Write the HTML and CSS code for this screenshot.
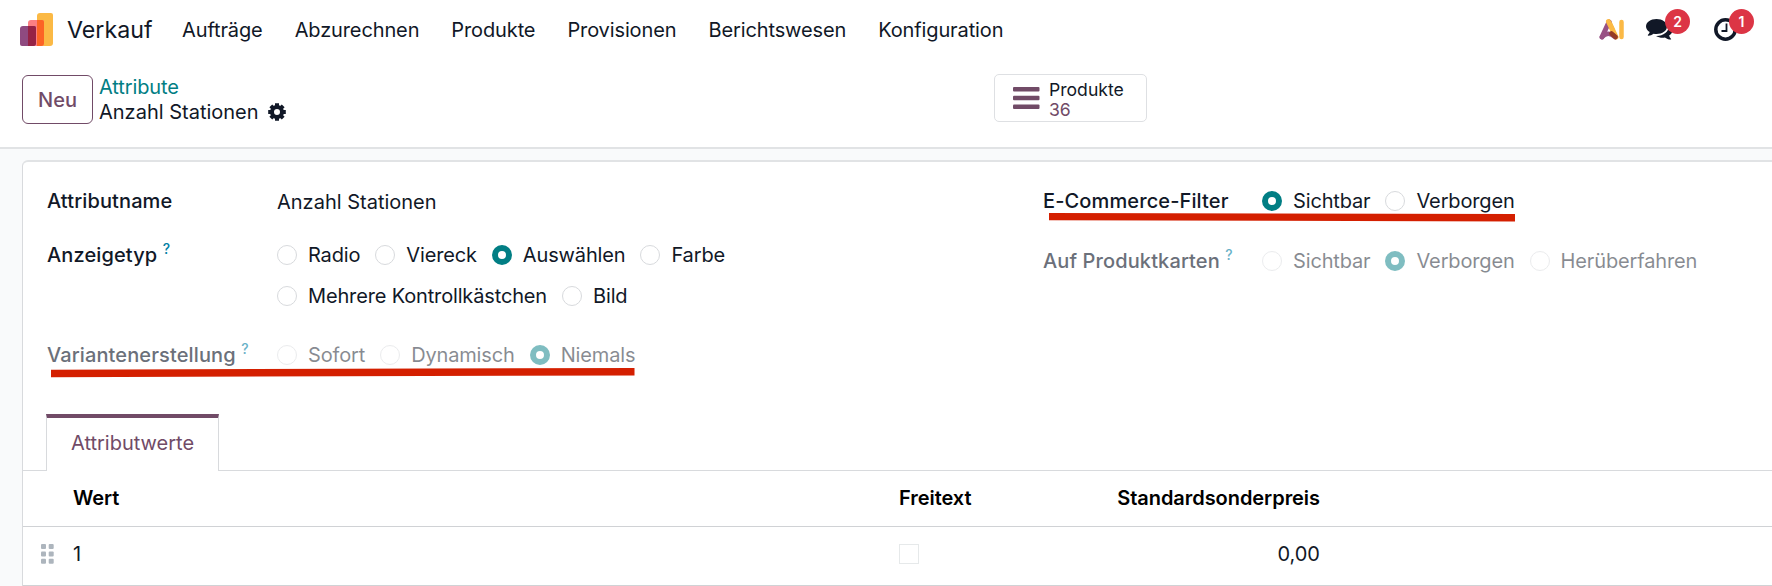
FILE: index.html
```html
<!DOCTYPE html>
<html lang="de">
<head>
    <meta charset="UTF-8">
    <meta name="viewport" content="width=device-width, initial-scale=1.0">
    <title>Verkauf - Anzahl Stationen</title>
    <link rel="stylesheet" href="styles.css">
</head>
<body>
    <nav class="navbar">
        <svg class="logo" width="33" height="33" viewBox="0 0 33 33">
            <path d="M17 3a3 3 0 0 1 3-3h11a2 2 0 0 1 2 2v28a3 3 0 0 1-3 3H17z" fill="#fbb945"/>
            <path d="M8 10a3 3 0 0 1 3-3h11a2 2 0 0 1 2 2v21a3 3 0 0 1-3 3H8z" fill="#fb7f83"/>
            <path d="M17 7h5a2 2 0 0 1 2 2v21a3 3 0 0 1-3 3h-4z" fill="#fc6425"/>
            <path d="M0 16a3 3 0 0 1 3-3h11a2 2 0 0 1 2 2v15a3 3 0 0 1-3 3H2a2 2 0 0 1-2-2z" fill="#8f4a80"/>
            <path d="M8 13h6a2 2 0 0 1 2 2v15a3 3 0 0 1-3 3H8z" fill="#962345"/>
        </svg>
        <a href="#" class="brand">Verkauf</a>
        <ul class="menu">
            <li><a href="#">Aufträge</a></li>
            <li><a href="#">Abzurechnen</a></li>
            <li><a href="#">Produkte</a></li>
            <li><a href="#">Provisionen</a></li>
            <li><a href="#">Berichtswesen</a></li>
            <li><a href="#">Konfiguration</a></li>
        </ul>
        <div class="systray">
            <svg class="ai-icon" width="25" height="21" viewBox="0 0 25 21">
                <path d="M10 3L17 18" stroke="#fbb945" stroke-width="5" stroke-linecap="round"/>
                <path d="M10 3L3 18" stroke="#985184" stroke-width="5" stroke-linecap="round"/>
                <path d="M9.5 2.6L13.5 11" stroke="#fbb945" stroke-width="5" stroke-linecap="round"/>
                <path d="M3 18Q9 11.500 16 18" fill="none" stroke="#985184" stroke-width="4.500" stroke-linecap="round"/>
                <path d="M12.500 14.500L16.500 18" stroke="#953b24" stroke-width="4.500" stroke-linecap="round"/>
                <path d="M22.500 3V18" stroke="#fbb945" stroke-width="4.500" stroke-linecap="round"/>
            </svg>
            <div class="tray-item">
                <svg width="27" height="23" viewBox="0 0 27 23" fill="#111827">
                    <path d="M10.500 0C16.500 0 21 3.200 21 7.500S16.500 15 10.500 15c-1 0-2-.1-2.900-.3-1.600 1.200-3.400 1.900-5.200 2-.6 0-.8-.5-.4-.9.900-.8 1.400-1.700 1.700-2.700C1.400 11.700 0 9.700 0 7.500 0 3.200 4.500 0 10.500 0z"/>
                    <path d="M23 6c2.200 1.300 3.500 3 3.500 5.200 0 2.100-1.300 4-3.400 5.300.3 1.200.9 2.200 1.800 3.200.4.500.2.900-.4.900-2 0-4-.800-5.600-2.100-3.300.5-6.400-.1-8.900-1.600C16.500 17.200 23.500 13 23 6z"/>
                </svg>
                <span class="badge">2</span>
            </div>
            <div class="tray-item clock">
                <svg width="23" height="23" viewBox="0 0 23 23" fill="none" stroke="#111827">
                    <circle cx="11.500" cy="11.500" r="9.700" stroke-width="3.500"/>
                    <path d="M12.500 5.500v7.500h-5" stroke-width="1.800"/>
                </svg>
                <span class="badge">1</span>
            </div>
        </div>
    </nav>

    <header class="control-panel">
        <button class="btn-new">Neu</button>
        <div class="breadcrumb">
            <a href="#">Attribute</a>
            <div class="current">
                <span>Anzahl Stationen</span>
                <svg width="18" height="18" viewBox="-9 -9 18 18">
                    <circle r="5" fill="none" stroke="#111827" stroke-width="4"/>
                    <path d="M0-8.800V-5M0 8.800V5M-8.800 0H-5M8.800 0H5M-6.200-6.200L-4-4M6.200 6.200L4 4M-6.200 6.200L-4 4M6.200-6.200L4-4" stroke="#111827" stroke-width="4"/>
                </svg>
            </div>
        </div>
        <button class="stat-button">
            <svg width="27" height="22" viewBox="0 0 27 22" fill="#714b67">
                <rect y="0" width="26.500" height="4.500" rx="1"/>
                <rect y="8.700" width="26.500" height="4.500" rx="1"/>
                <rect y="17.400" width="26.500" height="4.500" rx="1"/>
            </svg>
            <span class="stat-info">
                <span>Produkte</span>
                <span class="stat-value">36</span>
            </span>
        </button>
    </header>

    <main class="content">
        <div class="sheet">
            <div class="groups">
                <div class="group">
                    <div class="field name">
                        <label>Attributname</label>
                        <span class="value">Anzahl Stationen</span>
                    </div>
                    <div class="field type">
                        <label>Anzeigetyp <sup>?</sup></label>
                        <div class="choices">
                            <span class="choice"><i class="radio"></i>Radio</span>
                            <span class="choice"><i class="radio"></i>Viereck</span>
                            <span class="choice"><i class="radio checked"></i>Auswählen</span>
                            <span class="choice"><i class="radio"></i>Farbe</span>
                            <span class="choice"><i class="radio"></i>Mehrere Kontrollkästchen</span>
                            <span class="choice"><i class="radio"></i>Bild</span>
                        </div>
                    </div>
                    <div class="field variant disabled">
                        <label>Variantenerstellung <sup>?</sup></label>
                        <div class="choices">
                            <span class="choice"><i class="radio"></i>Sofort</span>
                            <span class="choice"><i class="radio"></i>Dynamisch</span>
                            <span class="choice"><i class="radio checked"></i>Niemals</span>
                        </div>
                        <svg class="marker" width="584" height="10" viewBox="0 0 584 10">
                            <path d="M0 1.700L583.500 0V7.500L0 9.200z" fill="#d41f00"/>
                        </svg>
                    </div>
                </div>
                <div class="group">
                    <div class="field filter">
                        <label>E-Commerce-Filter</label>
                        <div class="choices">
                            <span class="choice"><i class="radio checked"></i>Sichtbar</span>
                            <span class="choice"><i class="radio"></i>Verborgen</span>
                        </div>
                        <svg class="marker" width="466" height="9" viewBox="0 0 466 9">
                            <path d="M0 0L466 1V8.500L0 7.300z" fill="#d41f00"/>
                        </svg>
                    </div>
                    <div class="field cards disabled">
                        <label>Auf Produktkarten <sup>?</sup></label>
                        <div class="choices">
                            <span class="choice"><i class="radio"></i>Sichtbar</span>
                            <span class="choice"><i class="radio checked"></i>Verborgen</span>
                            <span class="choice"><i class="radio"></i>Herüberfahren</span>
                        </div>
                    </div>
                </div>
            </div>

            <div class="tabs">
                <a href="#" class="tab">Attributwerte</a>
            </div>

            <table class="list">
                <colgroup>
                    <col class="col-handle">
                    <col class="col-value">
                    <col class="col-free">
                    <col class="col-price">
                    <col>
                </colgroup>
                <thead>
                    <tr>
                        <th></th>
                        <th>Wert</th>
                        <th>Freitext</th>
                        <th class="number">Standardsonderpreis</th>
                        <th></th>
                    </tr>
                </thead>
                <tbody>
                    <tr>
                        <td class="handle">
                            <svg width="13" height="20" viewBox="0 0 13 20" fill="#adb5bd">
                                <rect width="5" height="5" rx="1"/><rect x="7.700" width="5" height="5" rx="1"/>
                                <rect y="7.400" width="5" height="5" rx="1"/><rect x="7.700" y="7.400" width="5" height="5" rx="1"/>
                                <rect y="14.800" width="5" height="5" rx="1"/><rect x="7.700" y="14.800" width="5" height="5" rx="1"/>
                            </svg>
                        </td>
                        <td>1</td>
                        <td><i class="checkbox"></i></td>
                        <td class="number">0,00</td>
                        <td></td>
                    </tr>
                </tbody>
            </table>
        </div>
    </main>
</body>
</html>
```
FILE: styles.css
```css
* {
    margin: 0;
    padding: 0;
    box-sizing: border-box;
}
body {
    font-family: Inter, "Liberation Sans", sans-serif;
    font-size: 20px;
    line-height: 24px;
    color: #111827;
    background: #fff;
}
a {
    color: inherit;
    text-decoration: none;
}
svg {
    display: block;
    flex: none;
}
button {
    font: inherit;
    letter-spacing: inherit;
    background: #fff;
}
.navbar {
    display: flex;
    align-items: center;
    height: 58px;
    padding: 0 20px;
}
.brand {
    margin-left: 14px;
    padding-top: 1px;
    width: 115px;
    font-size: 23.200px;
}
.menu {
    list-style: none;
    display: flex;
    gap: 32px;
    padding-top: 1px;
    letter-spacing: -0.12px;
}
.systray {
    display: flex;
    align-items: center;
    margin-left: auto;
    margin-right: 15px;
    padding-top: 1px;
}
.tray-item {
    position: relative;
    margin-left: 22px;
    top: 1px;
}
.tray-item.clock {
    margin-left: 41px;
    top: 0;
}
.badge {
    position: absolute;
    top: -10px;
    left: 19px;
    width: 25px;
    height: 25px;
    border-radius: 50%;
    background: #dc3545;
    color: #fff;
    font-size: 14px;
    font-weight: 600;
    line-height: 25px;
    text-align: center;
}
.clock .badge {
    top: -9px;
    left: 15px;
}
.control-panel {
    display: flex;
    align-items: flex-start;
    height: 91px;
    padding: 16px 22px 0;
    border-bottom: 2px solid #e1e3e5;
}
.btn-new {
    width: 71px;
    height: 49px;
    margin-top: 1px;
    border: 1.500px solid #714b67;
    border-radius: 6px;
    color: #714b67;
    font-weight: 500;
}
.breadcrumb {
    width: 894px;
    padding: 1px 0 0 6px;
    line-height: 25px;
}
.breadcrumb a {
    display: block;
    color: #017e84;
    letter-spacing: -0.1px;
}
.current {
    display: flex;
    align-items: center;
    gap: 9px;
}
.current svg {
    margin-top: -2px;
}
.stat-button {
    display: flex;
    align-items: center;
    gap: 9px;
    width: 153px;
    height: 48px;
    padding-left: 18px;
    margin-left: 7px;
    border: 1.500px solid #dee0e3;
    border-radius: 5px;
    color: #111827;
    font-size: 17.600px;
    line-height: 20px;
    text-align: left;
}
.stat-info {
    display: flex;
    flex-direction: column;
    padding-top: 4px;
}
.stat-value {
    color: #714b67;
}
.content {
    padding: 11px 0 0 22px;
    background: #f9fafb;
}
.sheet {
    height: 426px;
    background: #fff;
    border: 1px solid #d8dadd;
    border-width: 2px 0 0 1px;
    border-top-color: #e1e3e5;
    border-radius: 6px 0 0 0;
}
.groups {
    display: flex;
    height: 252px;
    padding: 20px 0 0 24px;
}
.group {
    width: 996px;
}
.group + .group {
    width: 729px;
    margin-top: -1px;
}
.field {
    position: relative;
    display: flex;
    line-height: 41px;
}
.field label {
    width: 230px;
    font-weight: 500;
    letter-spacing: 0.12px;
    white-space: nowrap;
}
.filter label,
.cards label {
    width: 219px;
}
.field sup {
    color: #0180a5;
    font-size: 14px;
    font-weight: 500;
    line-height: 0;
    vertical-align: 8px;
}
.name {
    height: 53px;
}
.name label {
    line-height: 39px;
}
.variant {
    margin-top: 18px;
}
.cards {
    margin-top: 19px;
}
.disabled label {
    color: #6b707a;
}
.disabled sup {
    opacity: 0.6;
}
.disabled .choices {
    opacity: 0.5;
}
.choices {
    display: flex;
    flex-wrap: wrap;
    align-content: flex-start;
    column-gap: 15px;
    width: 490px;
    letter-spacing: -0.15px;
}
.choice {
    display: flex;
    align-items: center;
    gap: 11px;
    white-space: nowrap;
}
.radio {
    width: 20px;
    height: 20px;
    margin-top: -2px;
    border: 1.500px solid #d8dadd;
    border-radius: 50%;
}
.radio.checked {
    border: 6px solid #017e84;
}
/* hand-drawn underline over the field */
.marker {
    position: absolute;
    left: 4px;
    top: 33px;
}
.filter .marker {
    left: 6px;
    top: 32px;
}
.tabs {
    display: flex;
    padding-left: 23px;
    border-bottom: 1px solid #d8dadd;
}
.tab {
    height: 57px;
    margin-bottom: -1px;
    padding: 0 24px;
    border: 1px solid #d8dadd;
    border-top: 4px solid #714b67;
    border-bottom: 0;
    background: #fff;
    color: #714b67;
    line-height: 50px;
}
.list {
    width: 100%;
    table-layout: fixed;
    border-collapse: collapse;
}
.list tr {
    height: 55px;
    border-bottom: 1px solid #d0d2d5;
}
.list tbody tr {
    height: 59px;
}
.list tbody td {
    padding-bottom: 3px;
}
.list th {
    color: #000;
    font-weight: 600;
    letter-spacing: -0.05px;
    text-align: left;
}
.col-handle {
    width: 50px;
}
.col-value {
    width: 826px;
}
.col-free {
    width: 200px;
}
.col-price {
    width: 221px;
}
.list .number {
    text-align: right;
}
.list .handle {
    padding-left: 18px;
}
.checkbox {
    display: block;
    width: 20px;
    height: 20px;
    border: 1px solid #e6e9ea;
}
```
